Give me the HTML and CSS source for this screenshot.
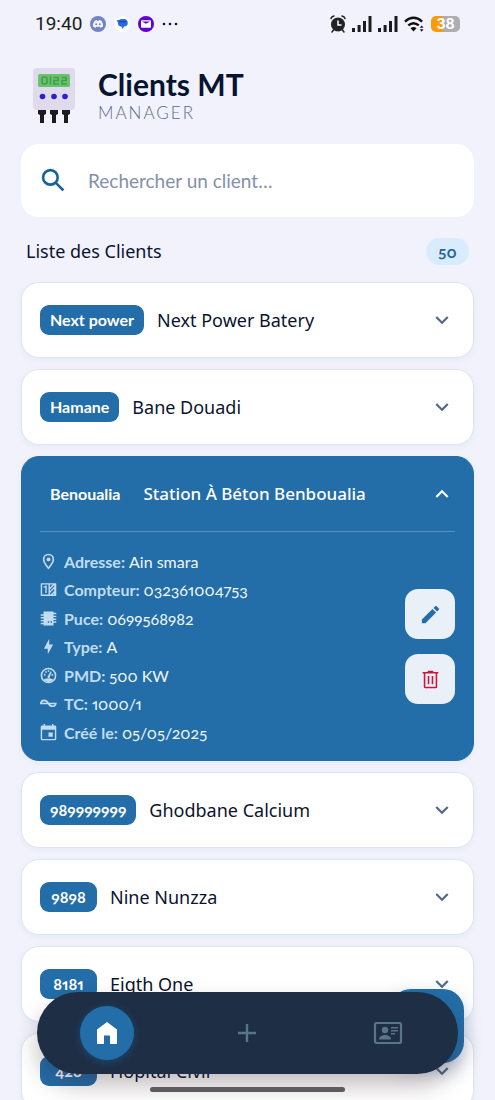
FILE: index.html
```html
<!DOCTYPE html>
<html lang="fr">
<head>
<meta charset="utf-8">
<meta name="viewport" content="width=device-width, initial-scale=1">
<title>Clients MT Manager</title>
<link rel="stylesheet" href="styles.css">
</head>
<body>
<svg class="defs" aria-hidden="true">
  <symbol id="chevron" viewBox="0 0 24 24"><path d="M7.41 8.59 12 13.17l4.59-4.58L18 10l-6 6-6-6z"/></symbol>
  <symbol id="signal" viewBox="0 0 20 16"><path d="M0 12h3v4H0zM5.600 9h3v7h-3zM11 5h3v11h-3zM16.500 0h3v16h-3z"/></symbol>
</svg>
<div class="app">
  <div class="status">
    <span class="time">19:40</span>
    <svg class="status-app" viewBox="0 0 16 16"><circle cx="8" cy="8" r="8" fill="#7283c9"/><path d="M4.400 5q1.300-.8 2.400-.9l.4.700h1.600l.4-.7q1.100.1 2.400.9 1.700 2.700 1.500 5.500-1.400 1.100-2.800 1.300l-.6-1H6.300l-.6 1q-1.400-.2-2.800-1.300-.2-2.800 1.500-5.500z" fill="#f5f5ff"/><circle cx="6.200" cy="8.300" r="1" fill="#7283c9"/><circle cx="9.800" cy="8.300" r="1" fill="#7283c9"/></svg>
    <svg class="status-app" viewBox="0 0 16 16"><circle cx="8" cy="8" r="8" fill="#fff"/><path d="M2.500 4.200 5 4a4 2.500 0 0 1 3-1h1.500a4 3.800 0 0 1 .5 7.600L8.600 13l-1-2.300A4 3.800 0 0 1 4 6.500z" fill="#2a6be0"/><path d="M5 5h7v1.500H5z" fill="#174fb8"/></svg>
    <svg class="status-app" viewBox="0 0 16 16"><circle cx="8" cy="8" r="8" fill="#6001d2"/><rect x="3" y="4.300" width="10" height="7.400" rx=".8" fill="#fff"/><path d="M4 5.500h8L8 7.800z" fill="#6001d2"/></svg>
    <svg class="status-dots" viewBox="0 0 16 4" fill="#222"><circle cx="2" cy="2" r="1.300"/><circle cx="8" cy="2" r="1.300"/><circle cx="14" cy="2" r="1.300"/></svg>
    <div class="status-right">
      <svg class="alarm" viewBox="0 0 16 18"><g fill="none" stroke="#222327" stroke-width="1.500" stroke-linecap="round"><path d="M1 3.500Q1.500 1.500 4 1M15 3.500Q14.500 1.500 12 1M3.500 15 2 17M12.500 15l1.500 2"/></g><circle cx="8" cy="9.500" r="7" fill="#222327"/><path d="M8 5.500v4.500h3.500" fill="none" stroke="#fff" stroke-width="1.500"/></svg>
      <svg class="signal"><use href="#signal"/></svg>
      <svg class="signal"><use href="#signal"/></svg>
      <svg class="wifi" viewBox="0 0 22 17"><g fill="none" stroke="#111" stroke-width="2.500"><path d="M1 5.500Q10 -2.500 19 5.500M4.500 9.500q5.500-4.600 11 0"/></g><path d="M6.800 12.300q3.200-2.400 6.400 0L10 15.800z" fill="#111"/><path d="M18.500 9.500 20.500 12h-4zM18.500 16l2-2.500h-4z" fill="#111"/></svg>
      <span class="battery">38</span>
    </div>
  </div>

  <header class="header">
    <svg class="logo" viewBox="0 0 42 56"><rect width="42" height="42" rx="4" fill="#dfdaec"/><rect x="5" y="6" width="32" height="13" rx="1.500" fill="#68c46c"/><g fill="none" stroke="#459c50" stroke-width="1.600"><rect x="9" y="9" width="5" height="7" rx="2"/><path d="M17.500 8.500v8M20.500 9.500h4.700v3h-4.200v3.500h5M28.500 9.500h4.700v3H29v3.500h5"/></g><g fill="#2a20d0"><circle cx="9.500" cy="28.500" r="2.800"/><circle cx="21" cy="28.500" r="2.800"/><circle cx="32" cy="28.500" r="2.800"/></g><path d="M5 42h8v4l-2 1v8H7v-8l-2-1zM17 42h8v4l-2 1v8h-4v-8l-2-1zM29 42h8v4l-2 1v8h-4v-8l-2-1z" fill="#1d1923"/></svg>
    <div>
      <h1 class="title">Clients MT</h1>
      <p class="subtitle">MANAGER</p>
    </div>
  </header>

  <label class="search">
    <svg class="search-icon" viewBox="0 0 24 24"><circle cx="9" cy="9" r="7" /><path d="m14 14 7.500 7.500"/></svg>
    <input class="search-input" type="search" placeholder="Rechercher un client…" aria-label="Rechercher un client">
  </label>

  <div class="list-head">
    <h2 class="list-title">Liste des Clients</h2>
    <span class="count">50</span>
  </div>

  <main class="list">
    <article class="card"><button class="card-head" aria-expanded="false"><span class="badge">Next power</span><span class="name">Next Power Batery</span><svg class="chevron"><use href="#chevron"/></svg></button></article>
    <article class="card"><button class="card-head" aria-expanded="false"><span class="badge">Hamane</span><span class="name">Bane Douadi</span><svg class="chevron"><use href="#chevron"/></svg></button></article>
    <article class="card card-open">
      <button class="card-head" aria-expanded="true"><span class="badge">Benoualia</span><span class="name">Station À Béton Benboualia</span><svg class="chevron"><use href="#chevron"/></svg></button>
      <div class="card-body">
        <dl class="details">
          <div class="row"><svg class="row-icon" viewBox="0 0 24 24"><path d="M12 1a8 8 0 0 0-8 8c0 5.500 8 14 8 14s8-8.500 8-14a8 8 0 0 0-8-8zm0 2.300A5.700 5.700 0 0 1 17.700 9c0 3-3.200 7.600-5.700 10.600C9.500 16.600 6.300 12 6.300 9A5.700 5.700 0 0 1 12 3.300z"/><circle cx="12" cy="9" r="2.800"/></svg><dt>Adresse:</dt><dd>Ain smara</dd></div>
          <div class="row"><svg class="row-icon" viewBox="0 0 24 24"><path fill-rule="evenodd" d="M2 3h20a1 1 0 0 1 1 1v16a1 1 0 0 1-1 1H2a1 1 0 0 1-1-1V4a1 1 0 0 1 1-1zm1 2v14h9V5zm11 0v4l4-4zm6 1-6 6v2l6-6zm0 5-6 6v2h1l5-5zM20 17l-2 2h2z"/><path d="M5 8l3-1.500h1.500V17h-2V9H5z"/></svg><dt>Compteur:</dt><dd>032361004753</dd></div>
          <div class="row"><svg class="row-icon" viewBox="0 0 24 24"><path fill-rule="evenodd" d="M5 2h14v2h4v2h-4v2h4v2h-4v2h4v2h-4v2h4v2h-4v4H5v-2H1v-2h4v-2H1v-2h4v-2H1v-2h4V8H1V6h4zm6 14v2h2v-2zm4 0v2h2v-2z"/></svg><dt>Puce:</dt><dd>0699568982</dd></div>
          <div class="row"><svg class="row-icon" viewBox="0 0 24 24"><path d="M11 15H5.500L13 1v8h5.500L11 23z"/></svg><dt>Type:</dt><dd>A</dd></div>
          <div class="row"><svg class="row-icon" viewBox="0 0 24 24"><circle cx="12" cy="12" r="10" fill="none" stroke="currentColor" stroke-width="2.200"/><path d="M5 18q7-4 14 0-3 3-7 3t-7-3zM10.500 14l4.500-8 1.500.7-3 8.300a1.800 1.800 0 0 1-3-1z"/><circle cx="6.500" cy="11" r="1.300"/><circle cx="8.500" cy="7" r="1.300"/><circle cx="12" cy="5.500" r="1.200"/><circle cx="17.500" cy="11" r="1.300"/></svg><dt>PMD:</dt><dd>500 KW</dd></div>
          <div class="row"><svg class="row-icon" viewBox="0 0 24 24"><path d="M1 12c1-6 8-6 11 0 3 5.500 9 5 10.500 0M0 12h23.500" fill="none" stroke="currentColor" stroke-width="2.300"/></svg><dt>TC:</dt><dd>1000/1</dd></div>
          <div class="row"><svg class="row-icon" viewBox="0 0 24 24"><path fill-rule="evenodd" d="M5 0h2v2h10V0h2v2h2a2 2 0 0 1 2 2v17a2 2 0 0 1-2 2H3a2 2 0 0 1-2-2V4a2 2 0 0 1 2-2h2zM3 8v13h18V8zM12 12h6v6h-6z"/></svg><dt>Créé le:</dt><dd>05/05/2025</dd></div>
        </dl>
        <div class="actions">
          <button class="action" aria-label="Modifier"><svg viewBox="0 0 24 24"><path d="M3 17.250V21h3.750L17.810 9.940l-3.750-3.750zM20.710 7.040a1 1 0 0 0 0-1.410l-2.340-2.340a1 1 0 0 0-1.410 0l-1.830 1.830 3.750 3.750z"/></svg></button>
          <button class="action action-delete" aria-label="Supprimer"><svg viewBox="0 0 24 24"><path fill-rule="evenodd" d="M8.500 1h7v1.500H22v2h-1.500V21a2 2 0 0 1-2 2h-13a2 2 0 0 1-2-2V4.500H2v-2h6.500zM5.500 4.500V21h13V4.500zM8.500 7.500h2V18h-2zM13.500 7.500h2V18h-2z"/></svg></button>
        </div>
      </div>
    </article>
    <article class="card"><button class="card-head" aria-expanded="false"><span class="badge">989999999</span><span class="name">Ghodbane Calcium</span><svg class="chevron"><use href="#chevron"/></svg></button></article>
    <article class="card"><button class="card-head" aria-expanded="false"><span class="badge">9898</span><span class="name">Nine Nunzza</span><svg class="chevron"><use href="#chevron"/></svg></button></article>
    <article class="card"><button class="card-head" aria-expanded="false"><span class="badge">8181</span><span class="name">Eigth One</span><svg class="chevron"><use href="#chevron"/></svg></button></article>
    <article class="card"><button class="card-head" aria-expanded="false"><span class="badge">428</span><span class="name">Hopital Civil</span><svg class="chevron"><use href="#chevron"/></svg></button></article>
  </main>

  <button class="fab" aria-label="Ajouter un client"></button>
  <nav class="nav">
    <button class="nav-item" aria-label="Accueil" aria-current="page"><span class="nav-active"><svg viewBox="0 0 24 24"><path d="M2 8.500 12 1l10 7.500V23h-7v-8.500H9V23H2z"/></svg></span></button>
    <button class="nav-item" aria-label="Ajouter"><svg viewBox="0 0 24 24"><path d="M10.800 3h2.400v7.800H21v2.400h-7.800V21h-2.400v-7.800H3v-2.400h7.800z"/></svg></button>
    <button class="nav-item" aria-label="Contacts"><svg class="wide" viewBox="0 0 30 24"><rect x="2" y="2" width="26" height="20" rx="1.500" fill="none" stroke="currentColor" stroke-width="2.200"/><circle cx="12" cy="9" r="3.200"/><path d="M6 18.500c0-6 12-6 12 0zM18 6h7v1.500h-7zM18 9h7v1.500h-7zM18 12h4v1.500h-4z"/></svg></button>
  </nav>
  <div class="gesture"></div>
</div>
</body>
</html>
```

FILE: styles.css
```css
* { box-sizing: border-box; }

body {
  margin: 0;
  background: #f1f2fb;
  color: #0b1430;
  font-family: Lato, "Liberation Sans", sans-serif;
  font-variant-numeric: oldstyle-nums proportional-nums;
}

h1, h2, p, dl, dd { margin: 0; }
button { font: inherit; font-variant-numeric: inherit; border: 0; padding: 0; cursor: pointer; }
svg { display: block; fill: currentColor; flex: none; }
.defs { position: absolute; width: 0; height: 0; }

.app {
  position: relative;
  display: flex;
  flex-direction: column;
  height: 100vh;
  overflow: hidden;
}

.status {
  display: flex;
  flex: none;
  align-items: center;
  gap: 8px;
  height: 48px;
  padding: 0 35px;
}
.time { font: 400 19px/24px Roboto, sans-serif; color: #1b1c20; }
.status-app { width: 16px; height: 16px; }
.status-dots { width: 16px; height: 4px; }
.status-right { display: flex; align-items: center; gap: 6px; margin-left: auto; color: #1b1c20; }
.alarm { width: 16px; height: 18px; }
.signal { width: 20px; height: 16px; }
.wifi { width: 21px; height: 17px; }
.battery {
  width: 29px;
  border-radius: 5px;
  background: linear-gradient(90deg, #f99b0c 40%, #adadb3 40%);
  color: #fff;
  font: 700 14px/16px Inter, sans-serif;
  text-align: center;
}

.header {
  display: flex;
  flex: none;
  align-items: center;
  gap: 23px;
  height: 96px;
  padding: 0 33px;
}
.logo { width: 42px; height: 56px; }
.title { font-size: 30px; line-height: 34px; font-weight: 700; color: #061431; }
.subtitle { font-size: 17px; line-height: 24px; font-weight: 300; letter-spacing: 2px; color: #5c6b86; }

.search {
  display: flex;
  flex: none;
  align-items: center;
  gap: 22px;
  height: 73px;
  margin: 0 21px;
  padding: 0 20px;
  border-radius: 18px;
  background: #fff;
}
.search-icon { width: 25px; height: 25px; fill: none; stroke: #15629f; stroke-width: 2.500; }
.search-input {
  flex: 1;
  min-width: 0;
  border: 0;
  padding: 0;
  outline: 0;
  background: none;
  color: #0b1430;
  font: 400 19px/28px Lato, sans-serif;
}
.search-input::placeholder { color: #8490aa; opacity: 1; }

.list-head {
  display: flex;
  flex: none;
  align-items: center;
  justify-content: space-between;
  height: 65px;
  padding: 3px 26px 0;
}
.list-title { font: 400 18px/28px "Noto Sans", sans-serif; }
.count {
  min-width: 43px;
  border-radius: 14px;
  background: #d9ecfd;
  color: #1f6599;
  font-size: 16px;
  font-weight: 700;
  line-height: 27px;
  text-align: center;
}

.list {
  display: flex;
  flex: 1;
  flex-direction: column;
  gap: 11px;
  min-height: 0;
  padding: 0 21px;
  overflow-y: auto;
  scrollbar-width: none;
}
.card {
  flex: none;
  border: 1px solid #dce5f2;
  border-radius: 18px;
  padding: 0 18px;
  background: #fff;
  box-shadow: 0 2px 4px #dce5f280;
}
.card-head {
  display: flex;
  align-items: center;
  gap: 13px;
  width: 100%;
  height: 74px;
  background: none;
  color: inherit;
  text-align: left;
}
.badge {
  min-width: 57px;
  border-radius: 9px;
  padding: 0 10px;
  background: #236da8;
  color: #fff;
  font-size: 16px;
  font-weight: 700;
  line-height: 30px;
  text-align: center;
}
.name { flex: 1; font: 400 18px/28px "Noto Sans", sans-serif; }
.chevron { width: 26px; height: 26px; color: #526789; }

.card-open { border-color: #236da8; background: #236da8; color: #fff; }
.card-open .name { font-size: 17px; font-weight: 500; }
.card-open .chevron { color: #fff; transform: rotate(180deg); }

.card-body {
  display: flex;
  align-items: center;
  justify-content: space-between;
  border-top: 1px solid #5b91be;
  padding: 15px 0 14px;
}
.row { display: flex; align-items: center; height: 28px; font-size: 16px; }
.row:nth-child(even) { height: 29px; }
.row-icon { width: 17px; height: 17px; margin-right: 7px; color: #c2dcf2; }
.row dt { margin-right: 4px; font-weight: 700; color: #c2dcf2; }
.row dd { color: #f0f7fd; }

.actions { display: flex; flex-direction: column; gap: 15px; }
.action {
  display: grid;
  place-items: center;
  width: 50px;
  height: 50px;
  border-radius: 13px;
  background: #eaf0f8;
  color: #236da8;
}
.action svg { width: 23px; height: 23px; }
.action-delete { color: #cd1736; }
.action-delete svg { width: 19px; height: 19px; }

.fab {
  position: absolute;
  right: 31px;
  bottom: 37px;
  width: 74px;
  height: 74px;
  border-radius: 21px;
  background: #236da8;
  box-shadow: 0 8px 18px #33588c50;
}
.nav {
  position: absolute;
  right: 37px;
  bottom: 26px;
  left: 37px;
  display: flex;
  align-items: center;
  height: 82px;
  border-radius: 41px;
  background: #1e2e45;
  box-shadow: 0 12px 22px #30202848;
}
.nav-item {
  display: grid;
  flex: 1;
  place-items: center;
  height: 54px;
  background: none;
  color: #5a7489;
}
.nav-item svg { width: 24px; height: 24px; }
.nav-item .wide { width: 30px; height: 24px; }
.nav-active {
  display: grid;
  place-items: center;
  width: 54px;
  height: 54px;
  border-radius: 50%;
  background: #236da8;
  box-shadow: 0 2px 8px #236da870;
  color: #fff;
}
.gesture {
  position: absolute;
  right: 150px;
  bottom: 8px;
  left: 150px;
  height: 5px;
  border-radius: 3px;
  background: #5d5b5e;
}
```
